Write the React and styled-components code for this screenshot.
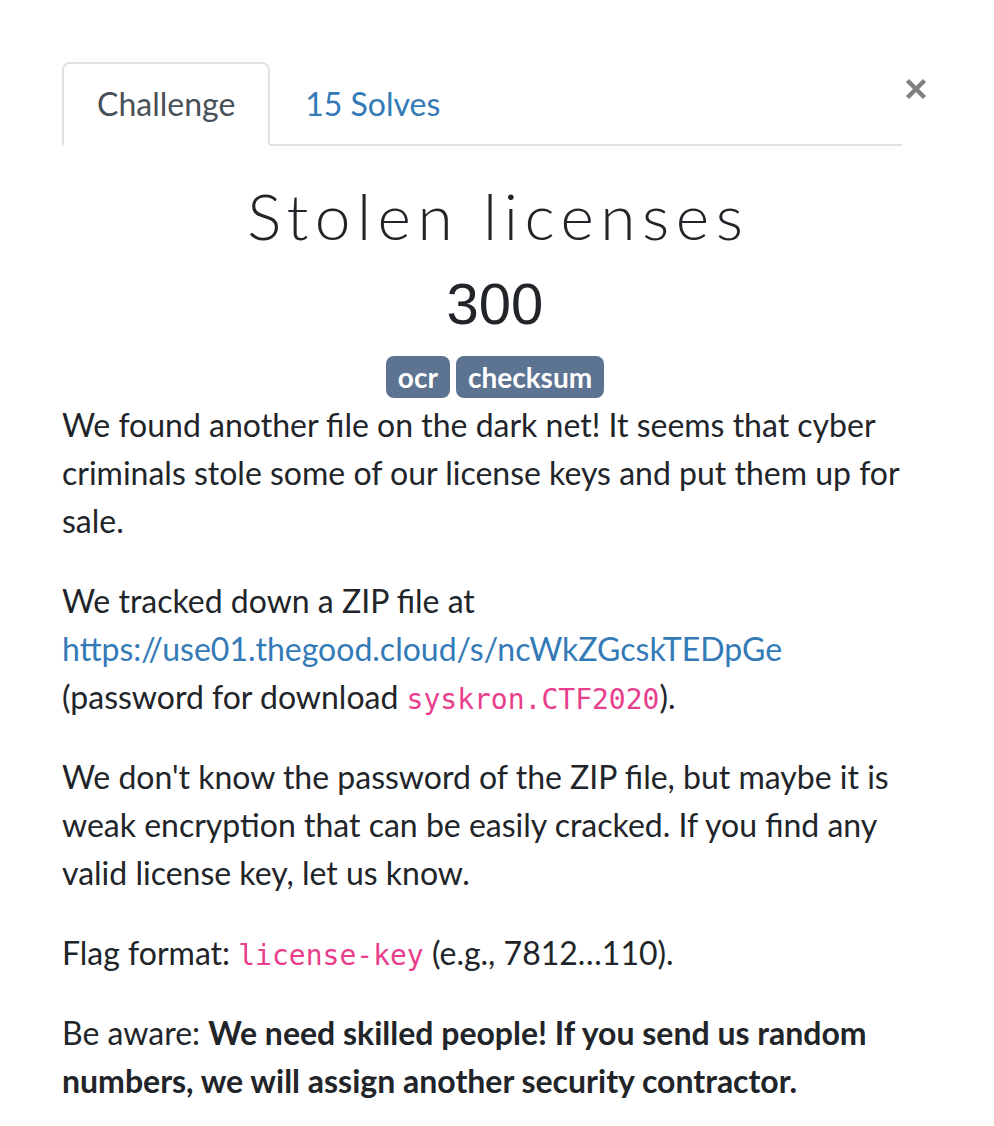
import React from "react";
import styled, { createGlobalStyle } from "styled-components";

const Global = createGlobalStyle`
  html, body { margin: 0; padding: 0; background: #fff; }
  body {
    font-family: Lato, "Noto Sans", sans-serif;
    color: #212529;
    font-size: 32px;
    line-height: 48px;
  }
`;

const Page = styled.div`
  padding: 62px 0 0 62px;
  width: 866px;
`;

const Header = styled.div`
  display: flex;
  align-items: flex-start;
`;

const Tabs = styled.ul`
  display: flex;
  list-style: none;
  margin: 0;
  padding: 0;
  width: 840px;
  border-bottom: 2px solid #dee2e6;
`;

const Tab = styled.li`
  margin-bottom: -2px;
  padding: 16px 33px;
  border: 2px solid ${(p) => (p.$active ? "#dee2e6" : "transparent")};
  border-bottom-color: ${(p) => (p.$active ? "#fff" : "transparent")};
  border-radius: 8px 8px 0 0;
  background: ${(p) => (p.$active ? "#fff" : "transparent")};
  color: ${(p) => (p.$active ? "#495057" : "#337ab7")};
  font-size: 32px;
  line-height: 48px;
`;

const Close = styled.button`
  margin: 16px 0 0 3px;
  padding: 0;
  width: 22px;
  height: 22px;
  border: 0;
  background: none;
  display: flex;
  cursor: pointer;
`;

const Body = styled.div`
  padding-top: 31px;
`;

const Title = styled.h2`
  margin: 0 0 16px;
  padding-left: 6.5px;
  text-align: center;
  font-family: Lato, "Noto Sans", sans-serif;
  font-weight: 300;
  font-size: 64px;
  line-height: 77px;
  letter-spacing: 6.5px;
  color: #212529;
`;

const Value = styled.h3`
  margin: 0 0 16px;
  text-align: center;
  font-family: "Liberation Sans", Arial, sans-serif;
  font-weight: 400;
  font-size: 58px;
  line-height: 67px;
  color: #212529;
`;

const Tags = styled.div`
  display: flex;
  justify-content: center;
  align-items: center;
  gap: 6px;
  height: 48px;
`;

const Badge = styled.span`
  display: inline-block;
  background: #5c7391;
  color: #fff;
  font-weight: 700;
  font-size: 28px;
  line-height: 28px;
  padding: 7px 12px;
  border-radius: 8px;
`;

const P = styled.p`
  margin: 0 0 32px;
  font-size: 32px;
  line-height: 48px;
`;

const Link = styled.a`
  color: #337ab7;
  text-decoration: none;
`;

const Code = styled.code`
  font-family: "DejaVu Sans Mono", "Liberation Mono", monospace;
  font-size: 28px;
  line-height: 1;
  color: #e83e8c;
`;

export default function App() {
  return (
    <>
      <Global />
      <Page>
        <Header>
          <Tabs>
            <Tab $active>Challenge</Tab>
            <Tab>15 Solves</Tab>
          </Tabs>
          <Close aria-label="Close">
            <svg width="22" height="22" viewBox="0 0 22 22">
              <path
                d="M2.5 2.5 L19.5 19.5 M19.5 2.5 L2.5 19.5"
                stroke="#808080"
                strokeWidth="4.5"
                strokeLinecap="butt"
              />
            </svg>
          </Close>
        </Header>
        <Body>
          <Title>Stolen licenses</Title>
          <Value>300</Value>
          <Tags>
            <Badge>ocr</Badge>
            <Badge>checksum</Badge>
          </Tags>
          <P>
            We found another file on the dark net! It seems that cyber criminals
            stole some of our license keys and put them up for sale.
          </P>
          <P>
            We tracked down a ZIP file at{" "}
            <Link href="#">https://use01.thegood.cloud/s/ncWkZGcskTEDpGe</Link>{" "}
            (password for download <Code>syskron.CTF2020</Code>).
          </P>
          <P>
            We don't know the password of the ZIP file, but maybe it is weak
            encryption that can be easily cracked. If you find any valid license
            key, let us know.
          </P>
          <P>
            Flag format: <Code>license-key</Code> (e.g., 7812…110).
          </P>
          <P>
            Be aware:{" "}
            <strong>
              We need skilled people! If you send us random numbers, we will
              assign another security contractor.
            </strong>
          </P>
        </Body>
      </Page>
    </>
  );
}
